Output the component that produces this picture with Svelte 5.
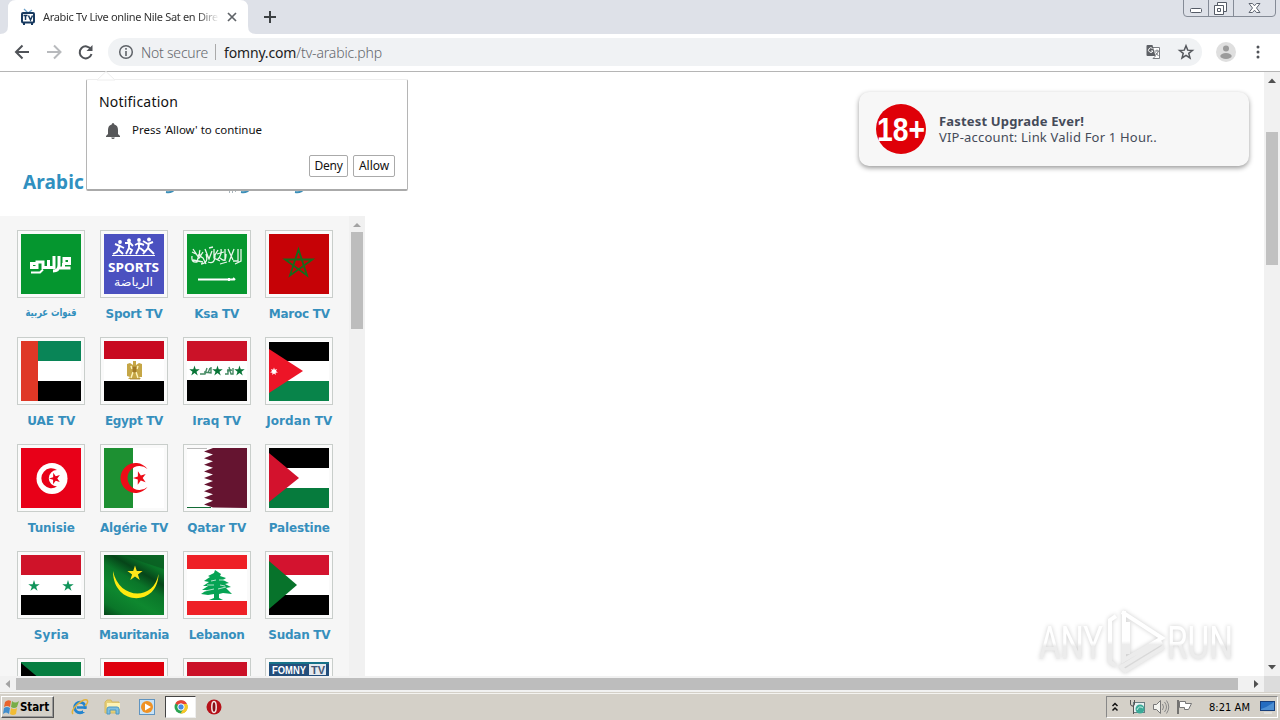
<script>
  const channels = [
    { id: 'arabi', label: 'قنوات عربية', w: 51 },
    { id: 'sport', label: 'Sport TV', w: 57 },
    { id: 'ksa', label: 'Ksa TV', w: 45 },
    { id: 'maroc', label: 'Maroc TV', w: 61 },
    { id: 'uae', label: 'UAE TV', w: 48 },
    { id: 'egypt', label: 'Egypt TV', w: 58 },
    { id: 'iraq', label: 'Iraq TV', w: 49 },
    { id: 'jordan', label: 'Jordan TV', w: 66 },
    { id: 'tunisie', label: 'Tunisie', w: 47 },
    { id: 'algerie', label: 'Algérie TV', w: 68 },
    { id: 'qatar', label: 'Qatar TV', w: 59 },
    { id: 'palestine', label: 'Palestine', w: 61 },
    { id: 'syria', label: 'Syria', w: 35 },
    { id: 'mauritania', label: 'Mauritania', w: 70 },
    { id: 'lebanon', label: 'Lebanon', w: 56 },
    { id: 'sudan', label: 'Sudan TV', w: 62 },
    { id: 'kuwait', label: '', w: 0 },
    { id: 'oman', label: '', w: 0 },
    { id: 'yemen', label: '', w: 0 },
    { id: 'fomny', label: '', w: 0 }
  ];

  // Spreads a label's letters so that it fills the given width.
  function fit(node, width) {
    if (!width) return;
    const natural = node.getBoundingClientRect().width;
    node.style.letterSpacing = (width - natural) / node.textContent.length + 'px';
  }

  function star(cx, cy, r, inner = 0.382, n = 5, turn = 0) {
    return Array.from({ length: n * 2 }, (_, i) => {
      const a = (Math.PI * i) / n - Math.PI / 2 + turn;
      const q = i % 2 ? r * inner : r;
      return `${(cx + q * Math.cos(a)).toFixed(2)},${(cy + q * Math.sin(a)).toFixed(2)}`;
    }).join(' ');
  }

  const teeth = Array.from({ length: 9 }, (_, i) => `L17 ${i * 6.6 + 3.6}L26 ${i * 6.6 + 6.6}`).join('');
</script>

<div class="screen">
  <header class="tabs">
    <svg class="tabshape" width="262" height="34"><path d="M0 34Q8 34 8 26V8Q8 0 16 0H240Q248 0 248 8V26Q248 34 256 34Z" fill="#fff" /></svg>
    <div class="tab">
      <svg width="16" height="16" viewBox="0 0 16 16"><path d="M4 0L8 4L12 1" fill="none" stroke="#6aa0c9" stroke-width="1.3" /><rect x="2" y="4" width="12" height="9.500" rx="1" fill="#fff" stroke="#17395f" stroke-width="2" /><path d="M3 15H5M11 15H13" stroke="#17395f" stroke-width="2" /><path d="M3.500 6.500H7.500M5.500 6.500V11M8.500 6.500L10.500 11L12.500 6.500" fill="none" stroke="#17395f" stroke-width="1.500" /></svg>
      <div class="title"><span use:fit={175}>Arabic Tv Live online Nile Sat en Dire</span></div>
      <svg width="10" height="10" viewBox="0 0 10 10"><path d="M1 1L9 9M9 1L1 9" stroke="#5f6368" stroke-width="1.700" /></svg>
    </div>
    <svg class="plus" width="14" height="14" viewBox="0 0 14 14"><path d="M7 1V13M1 7H13" stroke="#3c4043" stroke-width="2" /></svg>
    <svg class="winbtns" width="94" height="18" viewBox="0 0 94 18"><path d="M.5 0V13Q.5 16.500 4 16.500H89Q92.500 16.500 92.500 13V0M25.500 0V16M50.500 0V16" fill="none" stroke="#858b96" /><rect x="7.500" y="8.500" width="11" height="4" rx="1" fill="#fff" stroke="#555b66" /><path d="M34.500 2.500H43.500V11.500H34.500Z" fill="#fff" stroke="#555b66" /><path d="M31.500 5.500H40.500V14.500H31.500ZM34.500 8.500H37.500V11.500H34.500Z" fill="#fff" stroke="#555b66" /><path d="M66 3.500H69.500L71.500 5.800L73.500 3.500H77L73.500 8L77 12.500H73.500L71.500 10.200L69.500 12.500H66L69.500 8Z" fill="#fff" stroke="#606672" /></svg>
  </header>

  <div class="toolbar">
    <svg class="nav" width="92" height="24" viewBox="0 0 92 24" fill="none" stroke-width="2"><g stroke="#505358"><path d="M15.500 5.500L9 12L15.500 18.500M9 12H22" transform="translate(7 0)" /></g><path d="M47 12H60M54 5.500L60.500 12L54 18.500" stroke="#b8babd" /><path d="M91 9.500A6 6 0 1 0 91.500 14" stroke="#505358" /><path d="M92.500 5V11H86.500Z" fill="#505358" /></svg>
    <div class="omnibox">
      <svg width="16" height="16" viewBox="0 0 16 16"><circle cx="8" cy="8" r="6.300" fill="none" stroke="#5f6368" stroke-width="1.500" /><path d="M8 7V12M8 4V5.700" stroke="#5f6368" stroke-width="1.600" /></svg>
      <span class="secure" use:fit={67}>Not secure</span>
      <i class="sep"></i>
      <span class="url" use:fit={158}><b>fomny.com</b>/tv-arabic.php</span>
      <svg class="translate" width="16" height="16" viewBox="0 0 16 16"><path d="M6 3.500H14.500V14.500H8" fill="#fff" stroke="#7b7e82" /><path d="M2.500 1H7.500L10.500 12H2.500Q1.500 12 1.500 11V2Q1.500 1 2.500 1Z" fill="#5d6065" /><path d="M7.500 4.500A2.300 2.300 0 1 0 8 7H6" fill="none" stroke="#fff" /><path d="M9.500 7H14M12 5.500V7M13.500 7Q12 11 9.800 11.500M10.500 8.500L13.500 12M8 14.500L10.500 12" fill="none" stroke="#7b7e82" /></svg>
      <svg class="fav" width="16" height="16" viewBox="0 0 16 16"><polygon points={star(8, 8.500, 6.800, 0.43)} fill="none" stroke="#55585d" stroke-width="1.500" /></svg>
    </div>
    <svg class="avatar" width="20" height="20" viewBox="0 0 20 20"><circle cx="10" cy="10" r="10" fill="#dfdfdf" /><circle cx="10" cy="6.500" r="3" fill="#9b9b9b" /><ellipse cx="10" cy="14" rx="5.700" ry="3" fill="#9b9b9b" /></svg>
    <svg class="dots" width="4" height="14" viewBox="0 0 4 14" fill="#505358"><circle cx="2" cy="2" r="1.500" /><circle cx="2" cy="7" r="1.500" /><circle cx="2" cy="12" r="1.500" /></svg>
  </div>

  <div class="viewport">
    <main class="page">
      <h1><span use:fit={61}>Arabic</span></h1>
      <svg class="tails" width="160" height="6" viewBox="0 0 160 6" fill="none" stroke="#3c8fb8"><path d="M13 3Q19 4 22 0M88 3Q94 4 97 0M142 3Q148 4 151 0" stroke-width="2" /><path d="M47.500 0V2M76.500 1V4M79.500 1V4M82.500 1V3" stroke="#aab6bd" /></svg>
      <section class="panel">
        <div class="grid">
          {#each channels as c}
            <a class="channel">
              <span class="frame">
                <svg width="60" height="60" viewBox="0 0 60 60">
                  {#if c.id === 'arabi'}
                    <rect width="60" height="60" fill="#05962f" />
                    <g fill="none" stroke="#fff" stroke-width="3"><path d="M49.500 34H42.500V29M43 29V24.500H48.500V29.500H43M42.500 34H38M38 22V31Q38 37 32 37M33 22V33.500H27.500V26M27.500 33.500H22V28L16 28V33.500H10.500V29.500H14.500" /></g><path d="M10 38.500H19L22 35.500" fill="none" stroke="#fff" stroke-width="2" />
                  {:else if c.id === 'sport'}
                    <rect width="60" height="60" fill="#4b51c0" />
                    <g fill="#fff"><circle cx="16" cy="8" r="1.900" /><circle cx="25" cy="6.500" r="1.900" /><circle cx="35" cy="6" r="1.900" /><circle cx="45" cy="5.500" r="1.900" /></g>
                    <path d="M9 20L13 18L16 12L11 10M16 12L20 14M15 16L19 20M21 9L26 9L29 12M25 9V14L22 20M25 14L28 16L26 20M31 11L35 9L40 11M35 9V14L32 20M36 14L41 18M39 7L44 10L49 8M45 9L44 14L39 20M44 14L50 20" fill="none" stroke="#fff" stroke-width="1.900" /><path d="M8 21.500H51" stroke="#fff" />
                    <text class="sp" x="4" y="38" textLength="51" lengthAdjust="spacingAndGlyphs">SPORTS</text>
                    <text class="ar" x="49" y="52" direction="rtl" font-size="12" textLength="39" lengthAdjust="spacingAndGlyphs">الرياضة</text>
                  {:else if c.id === 'ksa'}
                    <rect width="60" height="60" fill="#06972f" />
                    <g fill="none" stroke="#e8f6ea" stroke-width="1.300"><path d="M5 22Q4 29 10 28L12 20M6 15L12 24L16 18M13 16Q11 22 16 24L19 30M14 30Q22 29 19 20M18 15L22 25L25 17M21 28Q28 31 28 21L31 16M27 15V24L33 27M30 26Q35 22 34 15M33 24Q39 30 39 20M38 15V27M41 15L46 26M47 15L42 28M46 27H51V15M54 15V27L48 30M5 18L9 20M22 14L26 13M6 26L16 28M30 20L37 18M33 30L40 28" /></g><path d="M11 45.500H47M42 44V47M46 44L48 46" stroke="#fff" stroke-width="2" fill="none" />
                  {:else if c.id === 'maroc'}
                    <rect width="60" height="60" fill="#c60206" />
                    <polygon points="29.500,15.500 38,41.500 16,25.500 43.500,25.500 21,41.500" fill="none" stroke="#176a1b" stroke-width="1.800" />
                  {:else if c.id === 'uae'}
                    <rect width="60" height="60" fill="#fff" /><path d="M17 0H60V20H17Z" fill="#098557" /><path d="M17 40H60V60H17Z" /><path d="M0 0H17V60H0Z" fill="#df3826" />
                  {:else if c.id === 'egypt'}
                    <rect width="60" height="60" fill="#fff" /><path d="M0 0H60V18H0Z" fill="#c80920" /><path d="M0 40H60V60H0Z" />
                    <path d="M29 20L32 20V24L35 22L38 23V36L35 36L37 38H24L26 36L23 35V23L26 22L29 24Z" fill="#c5a646" /><path d="M27 25L28 28M34 25L33 28M29 31L27 37M32 31L34 37" stroke="#fff4bd" stroke-width="1.400" /><path d="M29 26H32V31H29ZM26 38H36" fill="#a17a27" stroke="#a17a27" stroke-width=".7" />
                  {:else if c.id === 'iraq'}
                    <rect width="60" height="60" fill="#fff" /><path d="M0 0H60V20H0Z" fill="#cb1228" /><path d="M0 39H60V60H0Z" /><g fill="#087537"><polygon points={star(7.500, 30, 5.500)} /><polygon points={star(30.500, 30, 5.500)} /><polygon points={star(52.500, 30, 5.500)} /></g><path d="M13 33H18L20 27M17 31L24 32V26M21 32L23 27M38 33H41V28M42 26L44 33H46V27M40 30L45 29" fill="none" stroke="#448962" stroke-width="1.400" />
                  {:else if c.id === 'jordan'}
                    <rect width="60" height="60" fill="#fff" /><path d="M0 1H60V20H0Z" /><path d="M0 40H60V60H0Z" fill="#08844a" /><path d="M0 8L34 30L0 52Z" fill="#ed1527" /><polygon points={star(5, 30.500, 4, 0.5, 7)} fill="#fff" />
                  {:else if c.id === 'tunisie'}
                    <rect width="60" height="60" fill="#e80018" /><circle cx="31" cy="30.500" r="15.500" fill="#fff" /><path d="M36 22A10 10 0 1 0 36 38.500A8.200 8.200 0 1 1 36 22Z" fill="#e80018" /><polygon points={star(34, 30.500, 6, 0.382, 5, -0.3)} fill="#e80018" />
                  {:else if c.id === 'algerie'}
                    <rect width="60" height="60" fill="#fff" /><path d="M0 0H29V60H0Z" fill="#1d9032" /><path d="M43.500 21A15 15 0 1 0 43.500 39A12 12 0 1 1 43.500 21Z" fill="#ed0c17" /><polygon points={star(36, 30, 7, 0.382, 5, -0.3)} fill="#ed0c17" />
                  {:else if c.id === 'qatar'}
                    <rect width="60" height="60" fill="#fff" /><path d={`M60 0H17L26 0${teeth}L60 60Z`} fill="#651430" /><path d="M0 0H20" stroke="#777" /><path d="M0 59.500H24" stroke="#126b35" />
                  {:else if c.id === 'palestine'}
                    <rect width="60" height="60" fill="#fff" /><path d="M0 0H60V20H0Z" /><path d="M0 40H60V60H0Z" fill="#067b3d" /><path d="M0 5L30 30L0 54Z" fill="#d3122d" />
                  {:else if c.id === 'syria'}
                    <rect width="60" height="60" fill="#fff" /><path d="M0 0H60V20H0Z" fill="#cf1329" /><path d="M0 40H60V60H0Z" /><g fill="#10945a"><polygon points={star(13, 31, 6)} /><polygon points={star(47, 31, 6)} /></g>
                  {:else if c.id === 'mauritania'}
                    <defs><linearGradient id="cloth" x1="0" y1="60" x2="14" y2="36" gradientUnits="userSpaceOnUse" spreadMethod="reflect"><stop offset="0" stop-color="#064519" /><stop offset=".4" stop-color="#0a7629" /><stop offset="1" stop-color="#0e882f" /></linearGradient></defs>
                    <rect width="60" height="60" fill="url(#cloth)" /><path d="M20 0H60V14Q40 8 20 0Z" fill="#0a5420" opacity=".6" />
                    <path d="M9 16C9 51.500 54 52 54.500 19C50 46 15 45 9 16Z" fill="#ffea10" /><polygon points={star(31, 18.500, 8)} fill="#ffe51a" />
                  {:else if c.id === 'lebanon'}
                    <rect width="60" height="60" fill="#fff" /><path d="M0 0H60V14H0ZM0 46H60V60H0Z" fill="#ee2026" /><path d="M28 15L34 19L33 21L39 23L36 25L42 28L38 29L44 32L39 33L45 39L36 38L32 39V43L36 45H22L27 43V39L21 40L14 39L20 35L15 35L21 31L16 31L22 27L17 26L23 22L21 21L27 18Z" fill="#06a354" /><path d="M20 30H27M32 25H37M31 34L39 32M18 36L27 34M24 26L29 25M33 30L38 31" stroke="#fff" stroke-width=".7" />
                  {:else if c.id === 'sudan'}
                    <rect width="60" height="60" fill="#fff" /><path d="M0 0H60V20H0Z" fill="#d3132f" /><path d="M0 40H60V60H0Z" /><path d="M0 6L28 30L0 54Z" fill="#07732b" />
                  {:else if c.id === 'kuwait'}
                    <rect width="60" height="60" fill="#067e41" /><path d="M0 1L19 17V43L0 60Z" />
                  {:else if c.id === 'oman'}
                    <rect width="60" height="60" fill="#de000e" />
                  {:else if c.id === 'yemen'}
                    <rect width="60" height="60" fill="#cb1128" />
                  {:else}
                    <rect width="60" height="60" fill="#234e7b" /><path d="M0 0H60V2H0Z" fill="#177289" /><path d="M40 2H57V13H40Z" fill="#e4e9ef" /><text class="fom" x="3" y="11.500" fill="#fff" textLength="34" lengthAdjust="spacingAndGlyphs">FOMNY</text><text class="fom" x="42" y="11.500" fill="#425574" textLength="14" lengthAdjust="spacingAndGlyphs">TV</text>
                  {/if}
                </svg>
              </span>
              {#if c.id === 'arabi'}
                <svg class="arlabel" width="60" height="20"><text class="ar" x="55.500" y="12" direction="rtl" font-size="11" fill="#318fbd" textLength="51" lengthAdjust="spacingAndGlyphs">{c.label}</text></svg>
              {:else if c.label}
                <span class="label" use:fit={c.w}>{c.label}</span>
              {/if}
            </a>
          {/each}
        </div>
        <div class="inner-scroll"><svg width="16" height="16"><path d="M4 11H12L8 7Z" fill="#a3a3a3" /></svg><i></i></div>
      </section>
    </main>
    <div class="vscroll"><svg width="16" height="16"><path d="M4 11H12L8 6.500Z" fill="#505050" /></svg><i></i><svg width="16" height="16"><path d="M4 5H12L8 9.500Z" fill="#505050" /></svg></div>
  </div>
  <div class="hscroll"><svg width="16" height="16"><path d="M10 4V12L5.500 8Z" fill="#a3a3a3" /></svg><i></i><svg class="right" width="16" height="16"><path d="M6 4V12L10.500 8Z" fill="#505050" /></svg><b></b></div>

  <footer class="taskbar">
    <div class="start">
      <svg width="17" height="17" viewBox="0 0 17 17"><path d="M2 3Q5 0 8 2L7 8Q4 6 1 8Z" fill="#e9642c" /><path d="M9 2Q12 5 16 2L14 8Q11 10 8 8Z" fill="#78ad48" /><path d="M1 9Q4 7 7 9L6 15Q3 12 0 15Z" fill="#418dcc" /><path d="M8 9Q11 11 14 9L13 15Q10 17 7 15Z" fill="#f1bc34" /></svg>
      <span use:fit={29}>Start</span>
    </div>
    <svg class="ie" width="18" height="18" viewBox="0 0 18 18"><circle cx="9" cy="9.500" r="5.300" fill="none" stroke="#2384cf" stroke-width="3" /><path d="M6 9.500H15" stroke="#2384cf" stroke-width="2.500" /><path d="M12 11H17V14H12Z" fill="#d4d0c8" /><path d="M2 16C-2 12 12 0 16 2Q18 4 14 8" fill="none" stroke="#e3b23a" stroke-width="1.500" /></svg>
    <svg class="folder" width="18" height="18" viewBox="0 0 18 18"><path d="M1 4L3 2H7L8 4H15V15H1Z" fill="#e6cf76" stroke="#d5b965" /><path d="M3 5H16V11H3Z" fill="#fff3b5" /><path d="M3 16V11Q3 9 5 9H13Q15 9 15 11V16H12V12H6V16Z" fill="#80bfe0" stroke="#4b98c5" /></svg>
    <svg class="media" width="18" height="18" viewBox="0 0 18 18"><rect x="1.500" y="1.500" width="15" height="15" fill="#c8e3f7" stroke="#6094c0" /><circle cx="9" cy="9" r="6" fill="#ef9225" /><path d="M7 5.500L13 9L7 12.500Z" fill="#fff" /></svg>
    <div class="active"><svg width="16" height="16" viewBox="0 0 16 16"><circle cx="8" cy="8" r="6.500" fill="#2ba451" /><path d="M8 8L2.400 4.500A6.500 6.500 0 0 1 14 5.200L8 5Z" fill="#e74335" /><path d="M8 5H14A6.500 6.500 0 0 1 7.500 14.500L11 9Z" fill="#f9c626" /><circle cx="8" cy="8" r="3.200" fill="#458be4" stroke="#fff" /></svg></div>
    <svg class="opera" width="16" height="16" viewBox="0 0 16 16"><circle cx="8" cy="8" r="7.500" fill="#b61119" /><ellipse cx="8" cy="8" rx="2.200" ry="5.500" fill="#871018" stroke="#f4e9e8" stroke-width="1.500" /></svg>
    <div class="tray">
      <svg width="8" height="11" viewBox="0 0 8 11"><path d="M1.500 4L4 1.500L6.500 4M1.500 8.500L4 6L6.500 8.500" fill="none" stroke="#111" stroke-width="1.500" /></svg>
      <svg class="net" width="17" height="16" viewBox="0 0 17 16"><rect x="4.500" y="3.500" width="11" height="10" fill="#e8f2f2" stroke="#687b80" /><path d="M1.500 1V5Q1.500 7 3.500 7H4.500V15M5.500 1V5Q5.500 7 3.500 7" fill="none" stroke="#555" /><circle cx="11" cy="10" r="4.500" fill="#3baa98" /><path d="M8 11Q10 6 14 9" fill="none" stroke="#caeee6" /></svg>
      <svg class="sound" width="18" height="16" viewBox="0 0 18 16"><path d="M1.500 5.500H4.500L8.500 1.500V14.500L4.500 10.500H1.500Z" fill="#f3f3ef" stroke="#777" /><path d="M10.500 5Q12.500 8 10.500 11M12.500 3Q16.500 8 12.500 13M14.500 1.500Q19 8 14.500 14.500" fill="none" stroke="#888" /></svg>
      <svg class="flag" width="18" height="16" viewBox="0 0 18 16"><path d="M2 1V15" stroke="#555" stroke-width="1.500" /><path d="M3.500 2.500H9.500V4.500H15.500L12.500 10.500H8.500V8.500H3.500Z" fill="#fff" stroke="#777" /></svg>
      <span class="clock" use:fit={41}>8:21 AM</span>
      <svg class="desk" width="15" height="13" viewBox="0 0 15 13"><rect x=".5" y=".5" width="14" height="9" fill="#246cc0" stroke="#173e7a" /><path d="M1 8Q8 6 14 1V9H1Z" fill="#4d8fd3" /><path d="M4 12H12" stroke="#eee" /></svg>
    </div>
  </footer>

  <svg class="arrow" width="18" height="9"><path d="M0 9L9 .5L18 9Z" fill="#fff" stroke="#eee" /></svg>
  <aside class="prompt">
    <div class="ask"><span use:fit={79}>Notification</span></div>
    <div class="perm"><svg width="16" height="18" viewBox="0 0 16 18"><path d="M8 1Q9.300 1 9.300 2.600Q13 3.500 13 8V12L15 14V15H1V14L3 12V8Q3 3.500 6.700 2.600Q6.700 1 8 1ZM6.200 15.500H9.800Q9.500 17 8 17Q6.500 17 6.200 15.500Z" fill="#57585a" /></svg><span use:fit={130}>Press 'Allow' to continue</span></div>
    <div class="buttons"><button class="deny"><span use:fit={28}>Deny</span></button><button><span use:fit={30}>Allow</span></button></div>
  </aside>

  <aside class="toast">
    <svg width="50" height="50" viewBox="0 0 50 50"><circle cx="25" cy="25" r="25" fill="#df0008" /><text x="1" y="37" class="eighteen" textLength="48" lengthAdjust="spacingAndGlyphs">18+</text></svg>
    <div><strong><span use:fit={145}>Fastest Upgrade Ever!</span></strong><p><span use:fit={218}>VIP-account: Link Valid For 1 Hour..</span></p></div>
  </aside>

  <svg class="mark" width="204" height="70" viewBox="0 0 204 70">
    <defs><linearGradient id="fade" x1="0" y1="0" x2="0" y2="1"><stop offset=".5" stop-color="#fff" /><stop offset=".56" stop-color="#ececec" /></linearGradient></defs>
    <g class="glow"><text x="5" y="53" textLength="64" lengthAdjust="spacingAndGlyphs">ANY</text><text x="133" y="53" textLength="66" lengthAdjust="spacingAndGlyphs">RUN</text>
      <path d="M82 10L76 14V56L82 60M88 6L128 32L90 54V5M94 16V48M128 36L87 61L91 65L130 41" fill="none" stroke="url(#fade)" stroke-width="4" /></g>
  </svg>
</div>

<style>
  :global(body) { margin: 0; overflow: hidden; }
  .screen { position: relative; width: 1280px; height: 720px; overflow: hidden; display: flex; flex-direction: column; background: #fff; font-family: "Noto Sans", "Open Sans", sans-serif; white-space: nowrap; }
  svg { display: block; flex: none; overflow: visible; }
  .tabs { height: 34px; background: #dee1e8; display: flex; position: relative; flex: none; }
  .tabshape { position: absolute; left: 0; top: 0; }
  .tab { position: relative; width: 228px; height: 34px; padding-left: 20px; display: flex; align-items: center; }
  .tab > svg:last-child { margin-left: 8px; }
  .title { width: 176px; margin-left: 7px; overflow: hidden; font-size: 11px; line-height: 16px; color: #333; mask-image: linear-gradient(90deg, #000 155px, transparent 176px); }
  .plus { margin: 10px 0 0 15px; }
  .winbtns { margin-left: auto; margin-right: 3px; }
  .toolbar { height: 37px; padding-bottom: 1px; box-sizing: border-box; flex: none; display: flex; align-items: center; background: #fff; }
  .nav { width: 92px; margin-right: 16px; }
  .omnibox { width: 1094px; height: 28px; border-radius: 14px; background: #f0f2f4; display: flex; align-items: center; box-sizing: border-box; padding-left: 10px; font-size: 14px; color: #64676c; font-weight: 300; }
  .secure { margin-left: 7px; }
  .sep { width: 1px; height: 16px; background: #aaa; margin: 0 8px 0 7px; }
  .url b { font-weight: 400; color: #222; }
  .translate { margin-left: auto; }
  .fav { margin: 0 8px 0 17px; }
  .avatar { margin-left: 14px; }
  .dots { margin-left: 20px; }
  .viewport { height: 605px; box-sizing: border-box; border-top: 1px solid #b5b5b5; display: flex; flex: none; }
  .page { width: 1264px; display: flex; flex-direction: column; position: relative; }
  h1 { margin: 0; height: 144px; padding: 96px 0 0 23px; box-sizing: border-box; font: 700 19px/28px "Noto Sans", sans-serif; color: #3090c0; }
  .tails { position: absolute; left: 153px; top: 117px; }
  .panel { width: 365px; height: 460px; background: #f6f6f6; display: flex; overflow: hidden; }
  .grid { width: 331px; height: 535px; padding: 14px 0 0 10px; margin-right: 8px; display: grid; grid-template-columns: repeat(4, 82.67px); grid-auto-rows: 107px; flex: none; }
  .channel { display: flex; flex-direction: column; align-items: center; }
  .frame { width: 60px; height: 60px; padding: 3px; border: 1px solid #c9cecb; background: #fafafa; flex: none; }
  .frame svg { overflow: hidden; }
  .label { font: 700 12px/16px "DejaVu Sans", sans-serif; color: #368fbd; margin-top: 8px; }
  .arlabel { margin-top: 6px; }
  .ar { font-family: "DejaVu Sans", sans-serif; font-weight: 700; }
  .frame .ar { fill: #fff; font-weight: 400; }
  .sp { font: 700 13px "Noto Sans", sans-serif; fill: #fff; }
  .fom { font: 700 10px "Liberation Sans", sans-serif; }
  .inner-scroll { width: 16px; background: #f1f1f1; }
  .inner-scroll i { display: block; width: 12px; height: 97px; background: #bdbdbd; margin-left: 2px; }
  .vscroll { width: 16px; background: #f1f1f1; display: flex; flex-direction: column; }
  .vscroll i { width: 12px; height: 133px; background: #c1c1c1; margin: 44px 0 auto 2px; }
  .hscroll { height: 16px; background: #f1f1f1; display: flex; align-items: center; flex: none; }
  .hscroll i { width: 1222px; height: 12px; background: #bdbdbd; }
  .hscroll .right { margin-left: 10px; }
  .hscroll b { width: 16px; height: 16px; background: #dcdcdc; }
  .taskbar { height: 28px; box-sizing: border-box; border-top: 1px solid #d4d0c8; background: #d4d0c8; box-shadow: inset 0 1px #f4f3f0; display: flex; align-items: center; padding-top: 1px; }
  .start { width: 53px; height: 22px; box-sizing: border-box; margin-left: 1px; padding-left: 1px; border: 1px solid; border-color: #fff #555 #555 #fff; box-shadow: inset -1px -1px #999; display: flex; align-items: center; font: 700 11.500px "DejaVu Sans Condensed", sans-serif; }
  .ie { margin-left: 17px; }
  .folder { margin-left: 15px; }
  .media { margin-left: 16px; }
  .active { width: 31px; height: 22px; margin-left: 9px; box-sizing: border-box; background: #fff; border: 1px solid; border-color: #444 #eee #eee #444; display: flex; align-items: center; justify-content: center; }
  .opera { margin-left: 10px; }
  .tray { height: 22px; box-sizing: border-box; width: 172px; margin: 0 2px 0 auto; border: 1px solid; border-color: #888 #fff #fff #888; display: flex; align-items: center; padding-left: 4px; }
  .net { margin-left: 10px; }
  .sound { margin-left: 6px; }
  .flag { margin-left: 6px; }
  .clock { font: 11px "DejaVu Sans Condensed", sans-serif; margin-left: 15px; }
  .desk { margin-left: auto; margin-right: 2px; }
  .arrow { position: absolute; left: 97px; top: 71px; z-index: 3; }
  .prompt { position: absolute; left: 86px; top: 79px; width: 322px; height: 112px; box-sizing: border-box; border: 1px solid #b5b5b5; border-top-color: #eee; border-bottom: 2px solid #aaa; border-radius: 2px; background: #fff; padding: 12px 12px; color: #111; z-index: 2; }
  .ask { font-size: 14px; line-height: 20px; }
  .perm { height: 20px; margin: 9px 0 0 6px; display: flex; align-items: center; font-size: 11.500px; gap: 11px; }
  .perm span { line-height: 16px; padding-bottom: 2px; }
  .buttons { display: flex; justify-content: flex-end; gap: 5px; margin-top: 14px; }
  button { width: 42px; height: 22px; padding: 0; border: 1px solid #aaa; border-radius: 2px; background: #fff; color: #111; font: 12px/18px "Noto Sans", sans-serif; }
  .deny { width: 39px; }
  .toast { position: absolute; left: 859px; top: 92px; width: 390px; height: 74px; box-sizing: border-box; background: #f7f7f7; border-radius: 10px; box-shadow: 0 2px 5px #999; padding-left: 17px; display: flex; align-items: center; gap: 13px; color: #454b59; font-size: 13px; line-height: 16px; }
  .toast strong { display: block; }
  .toast p { margin: 0; }
  .eighteen { font: 700 34px "Liberation Sans", sans-serif; fill: #fff; }
  .mark { position: absolute; left: 1034px; top: 606px; }
  .mark text { font: 400 46px "Roboto", sans-serif; fill: url(#fade); }
  .glow { filter: drop-shadow(0 0 2px #ccc); }
</style>
